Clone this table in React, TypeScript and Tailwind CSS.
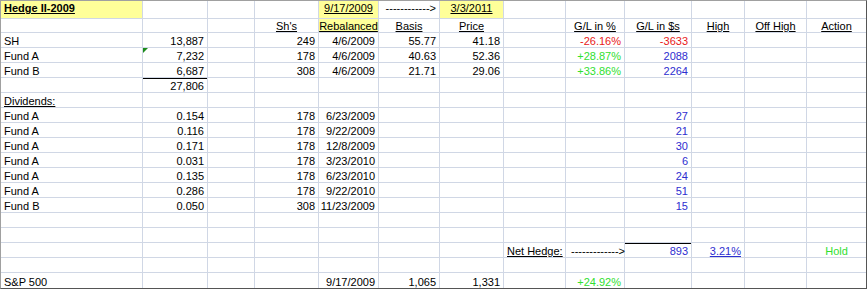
type Cell = { t: string; a?: 'l' | 'r' | 'c'; c?: string; line?: boolean; flag?: boolean } | null;

const red = 'text-[#e81818]';
const green = 'text-[#30e030]';
const blue = 'text-[#2e2ed0]';
const yellow = 'bg-[#ffff99]';

const L = (t: string, c = ''): Cell => ({ t, a: 'l', c });
const R = (t: string, c = ''): Cell => ({ t, a: 'r', c });
const C = (t: string, c = ''): Cell => ({ t, a: 'c', c });

const blank = (): Cell[] => Array(13).fill(null);

const row = (cells: Record<number, Cell>): Cell[] => {
  const r = blank();
  Object.entries(cells).forEach(([k, v]) => (r[Number(k)] = v));
  return r;
};

const dividends: [string, string, string, string, string][] = [
  ['Fund A', '0.154', '178', '6/23/2009', '27'],
  ['Fund A', '0.116', '178', '9/22/2009', '21'],
  ['Fund A', '0.171', '178', '12/8/2009', '30'],
  ['Fund A', '0.031', '178', '3/23/2010', '6'],
  ['Fund A', '0.135', '178', '6/23/2010', '24'],
  ['Fund A', '0.286', '178', '9/22/2010', '51'],
  ['Fund B', '0.050', '308', '11/23/2009', '15'],
];

const rows: Cell[][] = [
  row({
    0: L('Hedge II-2009', `font-bold underline ${yellow}`),
    4: C('9/17/2009', `underline ${yellow}`),
    5: R('------------>'),
    6: C('3/3/2011', `underline ${yellow}`),
  }),
  row({
    3: C("Sh's", 'underline'),
    4: C('Rebalanced', `underline ${yellow}`),
    5: C('Basis', 'underline'),
    6: C('Price', 'underline'),
    8: C('G/L in %', 'underline'),
    9: C('G/L in $s', 'underline'),
    10: C('High', 'underline'),
    11: C('Off High', 'underline'),
    12: C('Action', 'underline'),
  }),
  row({ 0: L('SH'), 1: R('13,887'), 3: R('249'), 4: R('4/6/2009'), 5: R('55.77'), 6: R('41.18'), 8: R('-26.16%', red), 9: R('-3633', red) }),
  row({ 0: L('Fund A'), 1: { t: '7,232', a: 'r', flag: true }, 3: R('178'), 4: R('4/6/2009'), 5: R('40.63'), 6: R('52.36'), 8: R('+28.87%', green), 9: R('2088', blue) }),
  row({ 0: L('Fund B'), 1: R('6,687'), 3: R('308'), 4: R('4/6/2009'), 5: R('21.71'), 6: R('29.06'), 8: R('+33.86%', green), 9: R('2264', blue) }),
  row({ 1: { t: '27,806', a: 'r', line: true } }),
  row({ 0: L('Dividends:', 'underline') }),
  ...dividends.map(([n, d, s, dt, v]) => row({ 0: L(n), 1: R(d), 3: R(s), 4: R(dt), 9: R(v, blue) })),
  blank(),
  blank(),
  row({
    7: L('Net Hedge:', 'underline'),
    8: { t: '------------->', a: 'l', c: 'pl-[5px]' },
    9: { t: '893', a: 'r', c: blue, line: true },
    10: R('3.21%', `underline ${blue}`),
    12: C('Hold', green),
  }),
  blank(),
  row({ 0: L('S&P 500'), 4: R('9/17/2009'), 5: R('1,065'), 6: R('1,331'), 8: R('+24.92%', green) }),
];

function GridCell({ cell, col, r }: { cell: Cell; col: number; r: number }) {
  const align =
    cell?.a === 'r' ? 'justify-end pr-[3px]' : cell?.a === 'c' ? 'justify-center' : 'justify-start pl-[3px]';
  return (
    <div
      className={[
        'relative flex items-end whitespace-nowrap border-[#d0d7e5]',
        col < 12 ? 'border-r' : '',
        r < rows.length - 1 ? 'border-b' : '',
        r === 0 ? 'pb-[4px]' : '',
        align,
        cell?.c ?? '',
        cell?.line ? 'shadow-[inset_0_1px_0_#000]' : '',
      ].join(' ')}
    >
      {cell?.flag && (
        <span className="absolute left-0 top-0 h-0 w-0 border-t-[5px] border-r-[5px] border-t-[#1b8a1b] border-r-transparent" />
      )}
      {cell && <span className="leading-[12px]">{cell.t}</span>}
    </div>
  );
}

export default function App() {
  return (
    <div className="w-[867px] h-[289px] bg-white border-t border-l border-[#a0a0a0] border-r border-b border-r-[#555] border-b-[#555] font-['Liberation_Sans',Arial,sans-serif] text-[11px] text-black">
      <div className="grid grid-cols-[142px_65px_47px_64px_60px_61px_64px_62px_59px_67px_53px_62px_59px] grid-rows-[18px_14px_repeat(17,15px)]">
        {rows.map((r, ri) => r.map((cell, ci) => <GridCell key={`${ri}-${ci}`} cell={cell} col={ci} r={ri} />))}
      </div>
    </div>
  );
}
